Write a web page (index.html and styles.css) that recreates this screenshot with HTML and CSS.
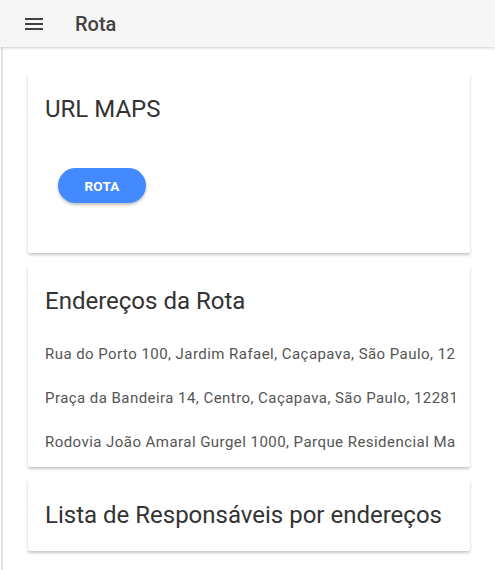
FILE: index.html
```html
<!DOCTYPE html>
<html lang="pt-BR">
<head>
<meta charset="utf-8">
<title>Rota</title>
<link rel="stylesheet" href="styles.css">
</head>
<body>
<header class="toolbar">
  <button class="menu-btn" aria-label="menu">
    <svg width="18" height="12" viewBox="0 0 18 12"><rect x="0" y="0" width="18" height="2" fill="#424242"/><rect x="0" y="5" width="18" height="2" fill="#424242"/><rect x="0" y="10" width="18" height="2" fill="#424242"/></svg>
  </button>
  <span class="toolbar-title">Rota</span>
</header>
<main class="content">
  <section class="card card-maps">
    <h2 class="card-title">URL MAPS</h2>
    <button class="btn-rota">ROTA</button>
  </section>
  <section class="card card-addr">
    <h2 class="card-title">Endereços da Rota</h2>
    <ul class="addr-list">
      <li>Rua do Porto 100, Jardim Rafael, Caçapava, São Paulo, 12281-000</li>
      <li>Praça da Bandeira 14, Centro, Caçapava, São Paulo, 12281-000</li>
      <li>Rodovia João Amaral Gurgel 1000, Parque Residencial Maria Elmira, Caçapava, São Paulo</li>
    </ul>
  </section>
  <section class="card card-resp">
    <h2 class="card-title">Lista de Responsáveis por endereços</h2>
  </section>
</main>
</body>
</html>
```
FILE: styles.css
```css
* { box-sizing: border-box; }
html, body { margin: 0; padding: 0; background: #fff; }
body {
  font-family: Roboto, "Liberation Sans", sans-serif;
  color: #222;
  width: 495px;
  height: 570px;
  overflow: hidden;
}
.toolbar {
  position: relative;
  z-index: 2;
  height: 47px;
  background: #f6f6f6;
  display: flex;
  align-items: center;
  padding-left: 25px;
  box-shadow: 0 1px 3px rgba(0,0,0,0.2);
}
.menu-btn {
  border: 0;
  background: none;
  padding: 0;
  display: flex;
  width: 18px;
  height: 12px;
  margin-top: 1px;
}
.toolbar-title {
  margin-left: 32px;
  font-size: 20px;
  font-weight: 500;
  color: #424242;
}
.content {
  border-left: 2px solid #e3e3e3;
  margin-left: 1px;
  padding: 26px 25px 0 25px;
  height: 523px;
  display: flex;
  flex-direction: column;
  gap: 12px;
}
.card {
  background: #fff;
  border-radius: 2px;
  box-shadow: 0 2px 3px rgba(0,0,0,0.22), 0 0 1px rgba(0,0,0,0.06);
  padding: 22px 15px 0 17px;
  overflow: hidden;
}
.card-title {
  margin: 0;
  font-size: 24px;
  font-weight: 400;
  color: #333;
  line-height: 28px;
  white-space: nowrap;
}
.card-maps { height: 180px; }
.btn-rota {
  display: block;
  margin: 45px 0 0 13px;
  width: 88px;
  height: 35px;
  border: 0;
  border-radius: 18px;
  background: #448aff;
  color: #fff;
  font-family: Roboto, "Liberation Sans", sans-serif;
  font-size: 13.5px;
  font-weight: 700;
  letter-spacing: 0.2px;
  box-shadow: 0 2px 3px rgba(0,0,0,0.25);
}
.card-addr { height: 202px; }
.addr-list {
  list-style: none;
  margin: 29px 0 0 0;
  padding: 0;
}
.addr-list li {
  font-size: 15px;
  letter-spacing: 0.45px;
  line-height: 20px;
  color: #555;
  white-space: nowrap;
  overflow: hidden;
  text-overflow: clip;
  margin-bottom: 24px;
}
.card-resp { height: 72px; }
```
